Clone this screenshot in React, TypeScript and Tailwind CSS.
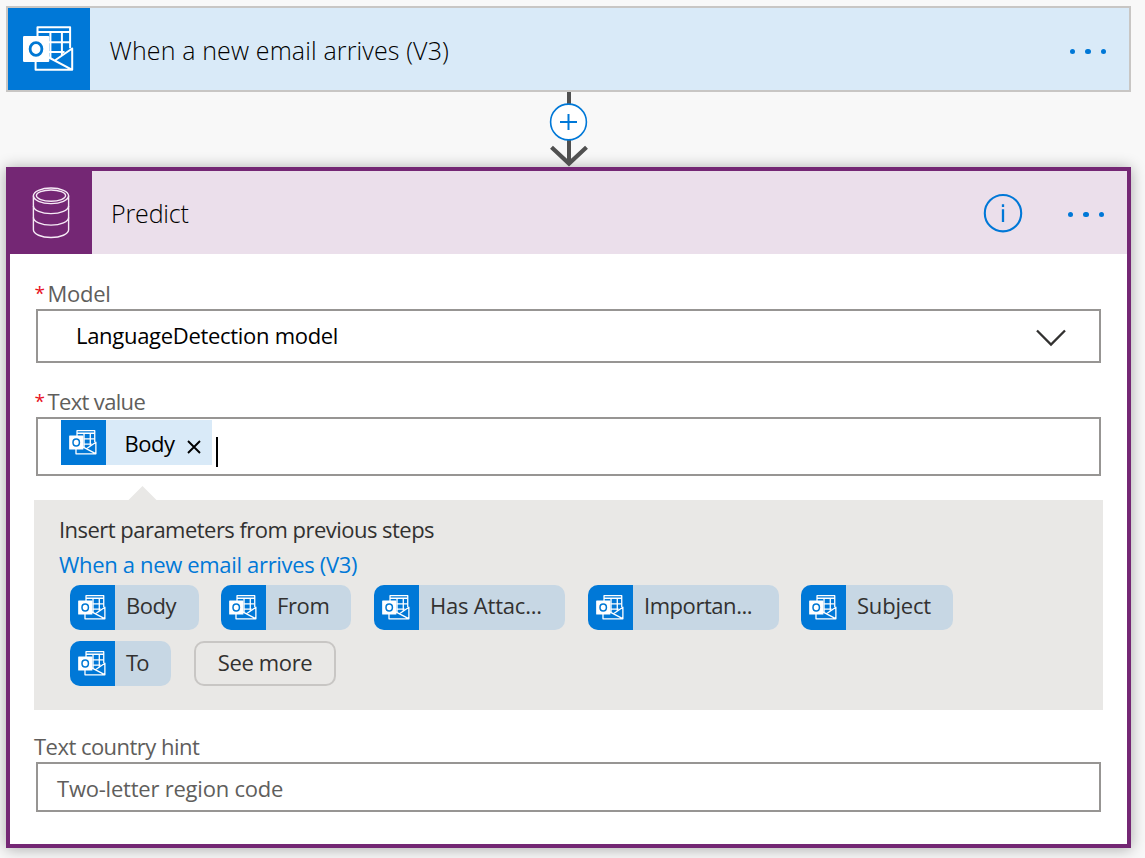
import React from "react";

function OutlookIcon({ className, stroke = 2 }: { className: string; stroke?: number }) {
  return (
    <svg viewBox="0 0 51 46" className={className} fill="none" stroke="white" strokeWidth={stroke}>
      <path d="M14.5 11V1.2h32.6v21" strokeLinejoin="round" />
      <path d="M14.5 6h32.6M26 16.2h21M26 26h15.500M27.400 6v26M38.900 6v23" />
      <path d="M12.6 35v8.8H49.2V22.5L32.500 34M25 31l23.800 12.600" strokeLinejoin="round" />
      <rect x="0" y="10" width="26.3" height="26" rx="1.2" fill="white" stroke="none" />
      <ellipse cx="13" cy="23" rx="5.9" ry="6.3" stroke="#0078d4" strokeWidth="2.8" />
    </svg>
  );
}

function DatabaseIcon() {
  return (
    <svg viewBox="0 0 38 52" className="h-[52px] w-[38px]" fill="none" stroke="#f6eaf6" strokeWidth="1.4">
      <ellipse cx="19" cy="8.8" rx="17.6" ry="7.8" />
      <ellipse cx="19" cy="8.6" rx="14.6" ry="5.6" />
      <path d="M1.4 8.8v34c0 4.3 7.9 7.7 17.6 7.7s17.6-3.4 17.6-7.7v-34" />
      <path d="M1.4 19c0 4.2 7.9 7.6 17.6 7.6s17.6-3.4 17.6-7.6M1.4 30.5c0 4.2 7.9 7.6 17.6 7.6s17.6-3.4 17.6-7.6" />
    </svg>
  );
}

function Dots() {
  return (
    <div className="flex gap-[10px]">
      <span className="size-[5.4px] rounded-full bg-[#0078d7]" />
      <span className="size-[5.4px] rounded-full bg-[#0078d7]" />
      <span className="size-[5.4px] rounded-full bg-[#0078d7]" />
    </div>
  );
}

function Pill({ label, width, tracking, pad = "pt-[5px]" }: { label: string; width: string; tracking: string; pad?: string }) {
  return (
    <div className={`flex h-[45px] overflow-hidden rounded-[10px] bg-[#c7d7e4] ${width}`}>
      <div className="w-[45px] shrink-0 bg-[#0078d7] pt-[10px] pl-2">
        <OutlookIcon className="h-[25px] w-[28px]" stroke={2.4} />
      </div>
      <span className={`pl-[11px] whitespace-nowrap ${pad} ${tracking}`}>{label}</span>
    </div>
  );
}

function Label({ text, required, tracking }: { text: string; required?: boolean; tracking: string }) {
  return (
    <div className="flex h-[30px] text-[#605e5c]">
      {required && <span className="w-[13.5px] pl-[0.5px] text-[19px] leading-[30px] text-[#e81123]">*</span>}
      <span className={`whitespace-nowrap ${tracking}`}>{text}</span>
    </div>
  );
}

export default function App() {
  return (
    <div className="h-[858px] w-[1145px] overflow-hidden bg-[#f8f8f8] pt-[6px] pl-[6px] font-['Open_Sans',sans-serif] text-[22px] leading-[30px] text-[#323130]">
      <div className="flex h-[86px] w-[1125px] items-center border-2 border-[#c8c6c4] bg-[#d9eaf8]">
        <div className="h-[82px] w-[82px] bg-[#0078d7] pt-[18px] pl-[14.5px]">
          <OutlookIcon className="h-[46px] w-[51px]" />
        </div>
        <span className="ml-[19.5px] flex-1 pt-[2px] text-[25px] leading-[34px] font-light tracking-[0.13px] text-black">When a new email arrives (V3)</span>
        <div className="pt-[5px] pr-[23px]"><Dots /></div>
      </div>

      <div className="h-[75px] pl-[543px]">
        <svg width="40" height="75" viewBox="0 0 40 75" fill="none">
          <path d="M20 0v72" stroke="#505050" strokeWidth="4" />
          <path d="M2.5 55.3L20 71.6l17.5-16.3" stroke="#505050" strokeWidth="4.2" />
          <circle cx="19.5" cy="30" r="17.9" fill="white" stroke="#0078d7" strokeWidth="1.6" />
          <path d="M11 30h17M19.5 22v16" stroke="#0078d7" strokeWidth="2" />
        </svg>
      </div>

      <div className="h-[681px] w-[1125px] border-4 border-[#742774] bg-white shadow-[0_1px_14px_rgba(0,0,0,0.32)]">
        <div className="flex h-[83px] items-center bg-[#ebdfeb]">
          <div className="flex h-full w-[82px] items-center justify-center bg-[#742774]"><DatabaseIcon /></div>
          <span className="ml-[19px] flex-1 pt-px text-[25px] leading-[34px] font-light tracking-[-0.15px] text-black">Predict</span>
          <svg width="40" height="40" viewBox="0 0 40 40" className="mr-[45px]" fill="none" stroke="#0078d7">
            <circle cx="20" cy="20.2" r="18.2" strokeWidth="2.1" />
            <path d="M20 16.2v12.8M20 11.2v2.8" strokeWidth="2.3" />
          </svg>
          <div className="pt-[4px] pr-[23px]"><Dots /></div>
        </div>

        <div className="pt-[24px] pl-6">
          <Label text="Model" required tracking="tracking-[-0.25px]" />
          <div className="mt-px ml-[2px] flex h-[54px] w-[1065px] items-center border-2 border-[#979593] pl-[38px] text-black">
            <span className="flex-1 pb-[2px] tracking-[-0.3px]">LanguageDetection model</span>
            <svg width="32" height="20" viewBox="0 0 32 20" className="mt-1 mr-[32.5px]" fill="none" stroke="#323130" strokeWidth="2.3">
              <path d="M2 2.5l14 14 14-14" />
            </svg>
          </div>

          <div className="mt-[23px]"><Label text="Text value" required tracking="tracking-[-0.65px]" /></div>
          <div className="mt-px ml-[2px] flex h-[59px] w-[1065px] border-2 border-[#979593] pt-px pl-[23px] text-black">
            <div className="flex h-[45px] w-[151px] bg-[#d9eaf8]">
              <div className="w-[45px] bg-[#0078d7] pt-[10px] pl-2"><OutlookIcon className="h-[25px] w-[28px]" stroke={2.4} /></div>
              <span className="w-[69px] pt-[8px] pl-[18.5px] tracking-[-0.5px]">Body</span>
              <svg width="14" height="14" viewBox="0 0 14 14" className="mt-[19.5px] ml-3" stroke="black" strokeWidth="1.9">
                <path d="M1 1l12 12M13 1L1 13" />
              </svg>
            </div>
            <div className="mt-[17px] ml-[4px] h-[30px] w-[2px] bg-black" />
          </div>

          <svg width="30" height="14" viewBox="0 0 30 14" className="mt-[10px] ml-[94px] block">
            <path d="M0.5 14L14.5 0l14 14z" fill="#e9e8e6" />
          </svg>
          <div className="h-[210px] w-[1069px] bg-[#e9e8e6] pt-[14px] pl-[25px]">
            <div className="h-[35px] tracking-[-0.53px]">Insert parameters from previous steps</div>
            <div className="h-[36px] tracking-[-0.33px] text-[#0078d7]">When a new email arrives (V3)</div>
            <div className="flex pl-[11px]">
              <div className="w-[151px]"><Pill label="Body" width="w-[129px]" tracking="tracking-[-0.45px]" /></div>
              <div className="w-[153px]"><Pill label="From" width="w-[130px]" tracking="tracking-[-0.4px]" /></div>
              <div className="w-[214px]"><Pill label="Has Attac..." width="w-[191px]" tracking="tracking-[-0.2px]" /></div>
              <div className="w-[213px]"><Pill label="Importan..." width="w-[191px]" tracking="tracking-[-0.45px]" /></div>
              <Pill label="Subject" width="w-[152px]" tracking="tracking-[-0.2px]" />
            </div>
            <div className="mt-[11px] flex gap-[23px] pl-[11px]">
              <Pill label="To" width="w-[101px]" tracking="tracking-[-1.8px]" pad="pt-[6px]" />
              <button className="h-[45px] w-[142px] rounded-[10px] border-2 border-[#c8c6c4] pb-1 tracking-[-0.35px] whitespace-nowrap">See more</button>
            </div>
          </div>

          <div className="mt-[21px]"><Label text="Text country hint" tracking="tracking-[-0.53px]" /></div>
          <div className="mt-px ml-[2px] flex h-[50px] w-[1065px] items-center border-2 border-[#979593] pt-[2px] pl-[19px] text-[#605e5c]">
            <span className="tracking-[-0.22px]">Two-letter region code</span>
          </div>
        </div>
      </div>
    </div>
  );
}
